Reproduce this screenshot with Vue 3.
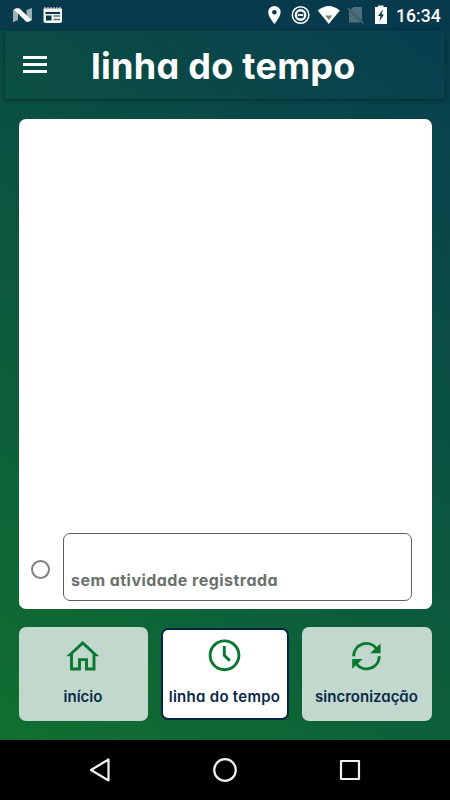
<template>
  <div class="phone">
    <div class="status-bar">
      <svg class="status-icons" width="390" height="30" viewBox="0 0 390 30">
        <path d="M13 10 18 8v12l-5 2.200zM26.500 10 32 8v12l-5.500 2z" fill="#9db2ba" />
        <path d="M14 9.500Q16.500 7.500 19.500 8.500L31.500 20Q29.500 22.500 26 21.500z" fill="#fff" />
        <path d="M43.500 8.500h18.500V21q0 2-2 2H45.500q-2 0-2-2z" fill="#f3f5ee" />
        <path d="M45 7v2M48 7v2M51 7v2M54 7v2M57 7v2M60 7v2" stroke="#f3f5ee" />
        <path d="M45.500 12h14.500v2H45.500zM46 15.500h5.500v5H46z" fill="#083a4d" />
        <path d="M53.500 16h6.500M53.500 19.500h6.500" stroke="#52747d" stroke-width="1.500" />
        <path d="M274.400 6a6.200 6.200 0 0 0-6.200 6.200c0 4.500 6.200 11.800 6.200 11.800s6.200-7.300 6.200-11.800A6.200 6.200 0 0 0 274.400 6zm0 4a2.300 2.300 0 1 1 0 4.600 2.300 2.300 0 0 1 0-4.600z" fill="#fff" fill-rule="evenodd" />
        <circle cx="300.600" cy="15" r="8.300" fill="none" stroke="#fff" stroke-width="1.500" />
        <circle cx="300.600" cy="15" r="4.700" fill="none" stroke="#fff" stroke-width="2.400" />
        <path d="M298 15h5.200" stroke="#fff" stroke-width="1.800" />
        <path d="M317.800 10.500Q328.800 1.500 339.800 10.500L328.800 24z" fill="#fff" />
        <path d="M325.300 15.500h7l-3.500 4.500z" fill="#7d7d7d" />
        <path d="M353.500 7H362v13.500L350.500 9.500zM349 10.500 360.800 22.500H349z" fill="#4d707c" />
        <path d="M348 8 363.500 23.500" stroke="#4d707c" stroke-width="1.500" />
        <path d="M378 5.500h5.500V7h3.500v17h-12V7h3zM382.500 10l-4.500 6h2.500l-1 5 4.500-6.500h-2.500l1.500-4.500z" fill="#fff" fill-rule="evenodd" />
      </svg>
      <span class="clock">16:34</span>
    </div>

    <header class="header">
      <button class="menu" aria-label="menu">
        <span></span>
        <span></span>
        <span></span>
      </button>
      <h1>linha do tempo</h1>
    </header>

    <main class="timeline">
      <div class="entry">
        <span class="marker"></span>
        <div class="entry-card">sem atividade registrada</div>
      </div>
    </main>

    <nav class="tabs">
      <button
        v-for="tab in tabs"
        :key="tab.id"
        class="tab"
        :class="{ active: tab.id === activeTab }"
        @click="activeTab = tab.id"
      >
        <svg width="36" height="36" viewBox="0 0 36 36" fill="none" stroke="#087830" stroke-width="2.900">
          <path v-if="tab.id === 'home'" d="M5 16.800 17.700 5 30.500 16.800H29V31H21.500V21.600H14.500V31H6.500V16.800Z" stroke-width="2.900" />
          <template v-else-if="tab.id === 'timeline'">
            <circle cx="17.500" cy="17.300" r="14.400" />
            <path d="M17.300 8v9.300l5.500 5.500" />
          </template>
          <template v-else>
            <path d="M4.600 18.200A12.800 12.800 0 0 1 27.500 10.500M30.300 18.200A12.800 12.800 0 0 1 7.500 26" />
            <path d="M31.600 5.500v9.800h-10.500zM3.200 30.800v-9.800h10.500z" fill="#087830" stroke="none" />
          </template>
        </svg>
        <span class="label">{{ tab.label }}</span>
      </button>
    </nav>

    <div class="system-nav">
      <svg width="24" height="28" viewBox="0 0 24 28">
        <path d="M3 14 20.500 3.500v21z" />
      </svg>
      <svg width="28" height="28" viewBox="0 0 28 28">
        <circle cx="14" cy="14" r="10.800" />
      </svg>
      <svg width="24" height="28" viewBox="0 0 24 28">
        <rect x="3" y="5" width="18" height="18" />
      </svg>
    </div>
  </div>
</template>

<script setup>
import { ref } from 'vue'

const activeTab = ref('timeline')

const tabs = [
  { id: 'home', label: 'início' },
  { id: 'timeline', label: 'linha do tempo' },
  { id: 'sync', label: 'sincronização' }
]
</script>

<style>
body {
  margin: 0;
  background: #000;
}
</style>

<style scoped>
.phone {
  display: flex;
  flex-direction: column;
  width: 450px;
  height: 800px;
  overflow: hidden;
  background: linear-gradient(36deg, #107030 5%, #0c593d 46%, #083f4e 94%);
  font-family: Inter, "Open Sans", sans-serif;
  font-feature-settings: "cv11";
}

button {
  padding: 0;
  border: 0;
  background: none;
  font: inherit;
  font-feature-settings: inherit;
}

.status-bar {
  display: flex;
  align-items: center;
  height: 30px;
  background: #083a4d;
}

.clock {
  margin-left: 6px;
  padding-top: 2px;
  color: #fff;
  font: 500 17.6px/30px Roboto, sans-serif;
}

.header {
  display: flex;
  align-items: center;
  box-sizing: border-box;
  height: 68px;
  margin: 1px 5px 0;
  padding-left: 18px;
  box-shadow: 0 1px 5px rgba(0, 20, 20, 0.55);
}

.menu {
  display: flex;
  flex-direction: column;
  gap: 4px;
  width: 24px;
  margin-bottom: 2px;
}

.menu span {
  height: 3px;
  background: #fff;
}

.header h1 {
  margin: 1px 0 0 44px;
  color: #fff;
  font-size: 36px;
  font-weight: 700;
  letter-spacing: 0.28px;
  line-height: 48px;
  white-space: nowrap;
}

.timeline {
  display: flex;
  flex-direction: column;
  justify-content: flex-end;
  box-sizing: border-box;
  height: 490px;
  margin: 20px 18.5px 0;
  padding: 0 19.5px 8px 12.5px;
  border-radius: 7px;
  background: #fff;
}

.entry {
  display: flex;
  align-items: center;
}

.marker {
  box-sizing: border-box;
  width: 19px;
  height: 19px;
  margin: 5px 12.5px 0 0;
  border: 2px solid #7b817e;
  border-radius: 50%;
}

.entry-card {
  flex: 1;
  box-sizing: border-box;
  height: 68px;
  padding: 36px 7.5px 0;
  border: 1px solid #5c6260;
  border-radius: 7px;
  color: #6b706d;
  font-size: 16px;
  font-weight: 700;
  letter-spacing: 0.46px;
  line-height: 20px;
}

.tabs {
  display: grid;
  grid-template-columns: 129px 128px 130px;
  gap: 13px;
  margin: 18px 18px 0 18.5px;
}

.tab {
  display: flex;
  flex-direction: column;
  align-items: center;
  box-sizing: border-box;
  height: 94px;
  padding-top: 11px;
  border-radius: 7px;
  background: #c2d8cc;
  color: #06284a;
  font-size: 15px;
  font-weight: 600;
}

.tab.active {
  height: 92px;
  margin-top: 1px;
  padding-top: 8px;
  border: 2px solid #032447;
  background: #fff;
  letter-spacing: 0.28px;
}

.label {
  margin-top: 12px;
  line-height: 22px;
  white-space: nowrap;
}

.system-nav {
  display: flex;
  align-items: center;
  justify-content: space-between;
  box-sizing: border-box;
  height: 60px;
  margin-top: auto;
  padding: 0 88px;
  background: #000;
}

.system-nav svg {
  fill: none;
  stroke: #f2f2f2;
  stroke-width: 2.2;
  stroke-linejoin: round;
}
</style>
